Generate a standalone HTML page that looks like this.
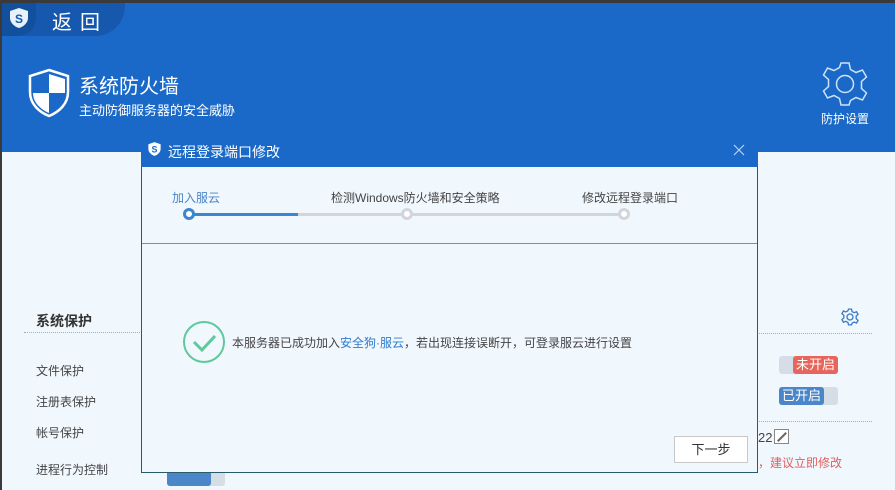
<!DOCTYPE html>
<html><head><meta charset="utf-8"><style>
*{margin:0;padding:0;box-sizing:border-box}
body{width:895px;height:490px;overflow:hidden;background:#f0f7fd;font-family:"Liberation Sans","Noto Sans CJK SC",sans-serif;position:relative}
.a{position:absolute}
.top{left:0;top:0;width:895px;height:152px;background:#1a69c8}
.t{white-space:nowrap}
</style></head><body>
<div class="a top"></div>
<div class="a" style="left:0;top:0;width:125px;height:36px;background:#1558ad;border-bottom-right-radius:30px"></div>
<div class="a" style="left:0;top:0;width:36px;height:36px;background:#12509e;border-bottom-right-radius:18px"></div>
<div class="a" style="left:0;top:0;width:895px;height:3px;background:#3a3a3a"></div>
<div class="a" style="left:0;top:0;width:2px;height:490px;background:#3a3a3a"></div>
<svg class="a" style="left:8px;top:7px" width="22" height="22" viewBox="0 0 22 22"><path d="M11 1 L20 4 V11 C20 16 15 20 11 21 C7 20 2 16 2 11 V4 Z" fill="#e8f0fa"/><text x="11" y="16" font-size="12" font-weight="bold" fill="#1558ad" text-anchor="middle" font-family="Liberation Sans">S</text></svg>
<div class="a t" style="left:52px;top:6px;color:#fff;font-size:20px;letter-spacing:8px">返回</div>
<svg class="a" style="left:27px;top:68px" width="44" height="50" viewBox="0 0 44 50"><path d="M22 2 L41 8 V24 C41 36 32 44 22 48 C12 44 3 36 3 24 V8 Z" fill="none" stroke="#fff" stroke-width="2.5"/><path d="M22 6 L38 11 V25 H22Z M22 25 V45 C13 41 6 34 6 25Z" fill="#fff"/></svg>
<div class="a t" style="left:79px;top:70px;color:#fff;font-size:20px">系统防火墙</div>
<div class="a t" style="left:79px;top:100px;color:#fff;font-size:13px">主动防御服务器的安全威胁</div>
<svg class="a" style="left:821px;top:60px" width="48" height="48" viewBox="0 0 48 48"><path d="M20 2h8l2 7 6 3 6-3 5 6-3 6 2 6 7 2v-? " fill="none"/><g fill="none" stroke="#cfe2f7" stroke-width="1.5"><path d="M20 3h8l1.5 6.5 5.5 3 6.5-2.5 4 7-5 4.5v7l5 4.5-4 7-6.5-2.5-5.5 3L28 45h-8l-1.5-6.5-5.5-3-6.5 2.5-4-7 5-4.5v-7l-5-4.5 4-7 6.5 2.5 5.5-3z"/><circle cx="24" cy="24" r="8.5"/></g></svg>
<div class="a t" style="left:821px;top:110px;color:#fff;font-size:12px">防护设置</div>
<div class="a t" style="left:36px;top:311px;color:#333;font-size:14px;font-weight:bold">系统保护</div>
<div class="a" style="left:24px;top:332px;width:118px;border-top:1px dotted #aab"></div>
<div class="a" style="left:757px;top:333px;width:115px;border-top:1px dotted #aab"></div>
<div class="a" style="left:757px;top:421px;width:115px;border-top:1px dotted #aab"></div>
<svg class="a" style="left:841px;top:308px" width="18" height="18" viewBox="0 0 48 48"><g fill="none" stroke="#3a7bc8" stroke-width="3.5"><path d="M20 3h8l1.5 6.5 5.5 3 6.5-2.5 4 7-5 4.5v7l5 4.5-4 7-6.5-2.5-5.5 3L28 45h-8l-1.5-6.5-5.5-3-6.5 2.5-4-7 5-4.5v-7l-5-4.5 4-7 6.5 2.5 5.5-3z"/><circle cx="24" cy="24" r="8"/></g></svg>
<div class="a t" style="left:36px;top:362px;color:#444;font-size:12px">文件保护</div>
<div class="a t" style="left:36px;top:393px;color:#444;font-size:12px">注册表保护</div>
<div class="a t" style="left:36px;top:424px;color:#444;font-size:12px">帐号保护</div>
<div class="a t" style="left:36px;top:461px;color:#444;font-size:12px">进程行为控制</div>
<div class="a" style="left:167px;top:470px;width:58px;height:16px;background:#d5dde6;border-radius:3px"></div>
<div class="a" style="left:167px;top:470px;width:44px;height:16px;background:#4a86c8;border-radius:3px"></div>
<div class="a" style="left:779px;top:356px;width:59px;height:18px;background:#d5dde6;border-radius:3px"></div>
<div class="a t" style="left:793px;top:356px;width:45px;height:18px;background:#e8655c;border-radius:3px;color:#fff;font-size:13px;line-height:18px;text-align:center">未开启</div>
<div class="a" style="left:779px;top:387px;width:59px;height:18px;background:#d5dde6;border-radius:3px"></div>
<div class="a t" style="left:779px;top:387px;width:45px;height:18px;background:#4a86c8;border-radius:3px;color:#fff;font-size:13px;line-height:18px;text-align:center">已开启</div>
<div class="a t" style="left:758px;top:430px;color:#444;font-size:13px">22</div>
<div class="a" style="left:774px;top:429px;width:15px;height:15px;border:1px solid #888;background:#fff"></div>
<div class="a" style="left:776px;top:436px;width:12px;height:2px;background:#666;transform:rotate(-45deg)"></div>
<div class="a t" style="left:758px;top:454px;color:#e06060;font-size:12px">，建议立即修改</div>
<!-- dialog -->
<div class="a" style="left:141px;top:133px;width:617px;height:340px;background:#f0f7fd;border:1px solid #2a5a6a"></div>
<div class="a" style="left:141px;top:133px;width:617px;height:34px;background:#1a69c8"></div>
<svg class="a" style="left:147px;top:141px" width="15" height="16" viewBox="0 0 22 22"><path d="M11 1 L20 4 V11 C20 16 15 20 11 21 C7 20 2 16 2 11 V4 Z" fill="#fff"/><text x="11" y="16" font-size="13" font-weight="bold" fill="#1a69c8" text-anchor="middle" font-family="Liberation Sans">S</text></svg>
<div class="a t" style="left:168px;top:142px;color:#fff;font-size:14px">远程登录端口修改</div>
<svg class="a" style="left:733px;top:144px" width="12" height="12"><path d="M1 1L11 11M11 1L1 11" stroke="#b9d4f2" stroke-width="1.2"/></svg>
<div class="a" style="left:142px;top:243px;width:615px;height:1px;background:#5a9bbf"></div>
<div class="a t" style="left:172px;top:189px;color:#4a86c8;font-size:12px">加入服云</div>
<div class="a t" style="left:331px;top:189px;color:#444;font-size:12px">检测Windows防火墙和安全策略</div>
<div class="a t" style="left:582px;top:189px;color:#444;font-size:12px">修改远程登录端口</div>
<div class="a" style="left:190px;top:213px;width:434px;height:3px;background:#d2d6da"></div>
<div class="a" style="left:190px;top:213px;width:108px;height:3px;background:#3a86d0"></div>
<div class="a" style="left:183px;top:208px;width:12px;height:12px;border-radius:50%;background:#fff;border:3px solid #3a86d0"></div>
<div class="a" style="left:401px;top:208px;width:12px;height:12px;border-radius:50%;background:#fff;border:3px solid #d2d6da"></div>
<div class="a" style="left:618px;top:208px;width:12px;height:12px;border-radius:50%;background:#fff;border:3px solid #d2d6da"></div>
<svg class="a" style="left:182px;top:320px" width="44" height="44"><circle cx="22" cy="22" r="20" fill="none" stroke="#5ec99a" stroke-width="2"/><path d="M12 22l8 8 13-14" fill="none" stroke="#5ec99a" stroke-width="3"/></svg>
<div class="a t" style="left:232px;top:334px;color:#444;font-size:12px">本服务器已成功加入<span style="color:#2f7bd0">安全狗·服云</span>，若出现连接误断开，可登录服云进行设置</div>
<div class="a t" style="left:674px;top:436px;width:74px;height:27px;background:#fff;border:1px solid #c8c8c8;color:#333;font-size:13px;line-height:25px;text-align:center">下一步</div>
</body></html>
